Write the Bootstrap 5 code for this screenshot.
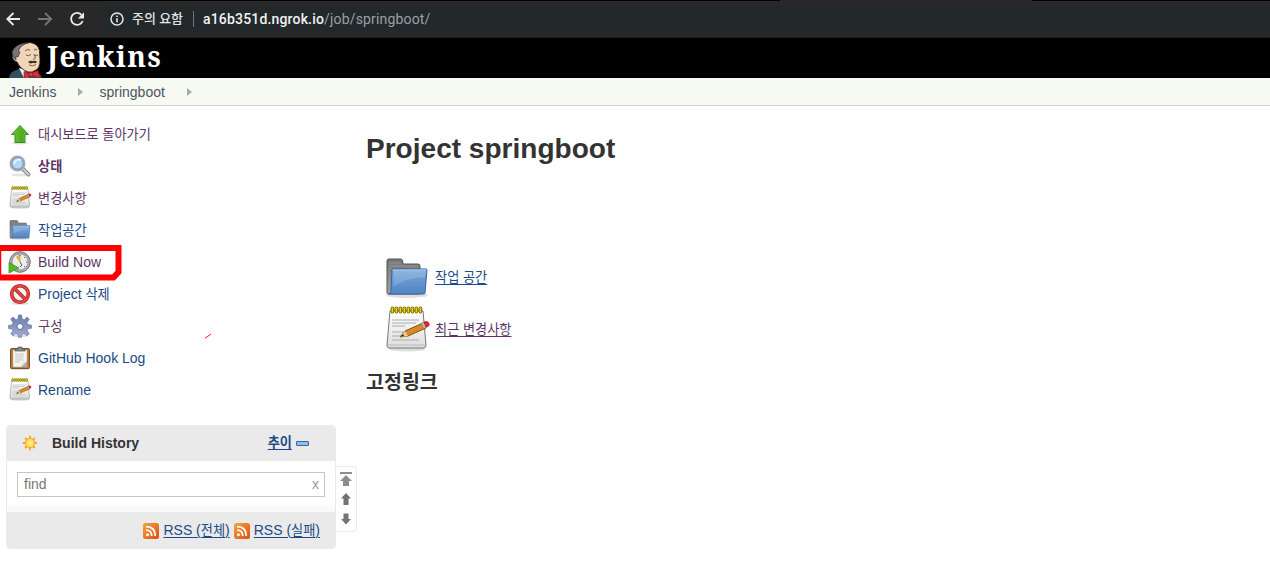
<!DOCTYPE html>
<html lang="ko">
<head>
<meta charset="utf-8">
<title>springboot [Jenkins]</title>
<link href="https://cdn.jsdelivr.net/npm/bootstrap@5.3.0/dist/css/bootstrap.min.css" rel="stylesheet">
<style>
body{font-family:"Liberation Sans","Noto Sans CJK KR",sans-serif;font-size:14px;line-height:20px;color:#333;background:#fff;overflow:hidden}
svg{display:block;flex:none}
.chrome-bar{height:38px;background:#292828;border-top:1px solid #000;border-bottom:1px solid #1f1c1b;padding-left:5px}
.tab-gap{left:780px;top:-1px;width:252px;height:1px;background:#292828}
.omnibox{height:29px;margin-left:10px;padding-left:9px;border-radius:15px 0 0 15px;background:#23282b;font-family:Roboto,"Noto Sans CJK KR",sans-serif;font-size:14px;color:#9aa0a6}
.address{letter-spacing:.17px}
.omnibox b{font-weight:500;color:#f1f1f1}
.warn{font-size:13px;font-weight:500;color:#e4e4e4;width:53px;margin-left:8px}
.sep{width:1px;height:16px;background:#73777a;margin:0 9px 0 8px}
.masthead{height:40px;background:#000;padding-left:9px}
.brand-name{font:bold 28px/36px "Noto Serif","DejaVu Serif","Liberation Serif",serif;letter-spacing:1.35px;color:#fff;margin-left:4px}
.crumbs{height:28px;background:#f6faf2;border-bottom:1px solid #cfd1ce;padding-left:9px;color:#4d545d}
.crumb-arrow{margin:1px 16px 0 22px}
.side{width:336px;padding:12px 0 0 6px}
.task{height:32px;padding-left:2px;gap:6px}
.task-text{color:#204a87;white-space:nowrap}
.ko{font-size:13.2px}
.task-text.ko{padding-top:1px}
.visited,.task-text.visited{color:#5c3566}
.build-frame{left:-5px;top:244px;width:127px;height:37px}
.history{width:330px;height:124px;margin-top:19px;border:1px solid #eaeaea;border-radius:4px;background:#fff}
.pane-head{height:35px;background:#eaeaea;padding:0 26px 1px 15px}
.find-box{width:308px;height:25px;margin:11px 0 8px 10px;border:1px solid #c5c5c5;padding:0 5px 1px 6px;color:#777}
.pane-gap{height:7px;background:#fafafa}
.feeds{height:36px;background:#eaeaea;padding:1px 15px 0 0}
.jlink{color:#204a87;text-decoration:underline;text-underline-offset:2px;text-decoration-thickness:1px}
.jlink.visited{color:#5c3566}
.pager{left:335px;top:466px;width:22px;height:66px;border:1px solid #eaeaea;border-radius:0 4px 4px 0;background:#fff}
.content-pane{padding:21px 0 0 30px}
.project-title{font-size:28px;line-height:44px;font-weight:bold;margin:0;letter-spacing:.02px}
.links{padding:81px 0 0 17px}
.link-row{height:52px;gap:4px}
.link-row .jlink{padding-bottom:1px}
.perma{font-size:19.5px;line-height:26px;font-weight:bold;margin:13px 0 0}
.stroke-mark{left:204px;top:332px}
</style>
</head>
<body>
<svg width="0" height="0" class="position-absolute">
<defs>
<linearGradient id="gFold" x2="0" y2="1"><stop stop-color="#7aa7da"/><stop offset="1" stop-color="#5085c3"/></linearGradient>
<linearGradient id="gGray" x2="0" y2="1"><stop stop-color="#747474"/><stop offset="1" stop-color="#a3a3a3"/></linearGradient>
<linearGradient id="gPaper" x2="0" y2="1"><stop stop-color="#fff"/><stop offset="1" stop-color="#ddd"/></linearGradient>
<linearGradient id="gGreen"><stop stop-color="#72cb38"/><stop offset="1" stop-color="#39960b"/></linearGradient>
<linearGradient id="gRss" x2="1" y2="1"><stop stop-color="#f7a33c"/><stop offset="1" stop-color="#dc4e15"/></linearGradient>
<linearGradient id="gGear" x2="0" y2="1"><stop stop-color="#6681ad"/><stop offset="1" stop-color="#aaa6d3"/></linearGradient>
<radialGradient id="gSun"><stop stop-color="#fff9ae"/><stop offset="1" stop-color="#ffd42c"/></radialGradient>
<symbol id="folder" viewBox="0 0 48 48"><ellipse cx="24" cy="41" rx="21" ry="3" fill="#ddd"/><path d="M4 39V7q0-2 2-2h12q2 0 2 5h15q2 0 2 2v27q0 1-2 1H6q-2 0-2-1z" fill="url(#gGray)" stroke="#555"/><path d="M6 9h12M6 12h29M6 15h3M6 19h3M6 23h3M6 27h3" stroke="#999" stroke-width=".8"/><path d="M9 15h34q1 0 1 1l-2 23q0 1-2 1H6q3-2 2-5z" fill="url(#gFold)" stroke="#3465a4"/><path d="M10 16h33l-1 7q-19 1-31 9z" fill="#fff" opacity=".16"/><path d="M9.700 16h33.500" stroke="#b0cdeb"/></symbol>
<symbol id="notepad" viewBox="0 0 48 48"><ellipse cx="24" cy="43" rx="18" ry="2.500" fill="#ddd"/><path d="M7 5h33l3 34q0 3-2 3H6q-2 0-2-3z" fill="url(#gPaper)" stroke="#777"/><path d="M5 39h37" stroke="#bbb"/><path d="M9 14h27M9 17h24M9 20h13M9 26h18M9 30h12M9 34h27" stroke="#aaa"/><g fill="#edd400" stroke="#6f6200"><rect x="8" y="1" width="2.800" height="6" rx="1.300"/><rect x="12" y="1" width="2.800" height="6" rx="1.300"/><rect x="16" y="1" width="2.800" height="6" rx="1.300"/><rect x="20" y="1" width="2.800" height="6" rx="1.300"/><rect x="24" y="1" width="2.800" height="6" rx="1.300"/><rect x="28" y="1" width="2.800" height="6" rx="1.300"/><rect x="32" y="1" width="2.800" height="6" rx="1.300"/><rect x="36" y="1" width="2.800" height="6" rx="1.300"/></g><path d="M17 31l5-6 18-8 3 5-18 8z" fill="#d68b24" stroke="#855213"/><path d="M17 31l5-6 3 5z" fill="#eecb90"/><path d="M17 31l3-3 1 2z" fill="#222"/><path d="M38 17.500l3-1.500 3 5-3 1.500z" fill="#bbb" stroke="#777" stroke-width=".6"/><path d="M41 16q4-1.500 5 1.500t-3 3.500z" fill="#ed2222" stroke="#a40000" stroke-width=".6"/></symbol>
<symbol id="rss" viewBox="0 0 16 16"><rect width="16" height="16" rx="2.500" fill="url(#gRss)"/><circle cx="4.500" cy="11.800" r="1.500" fill="#fff"/><path d="M3 7.200q5.700 0 5.700 5.800M3 3.700q9.300 0 9.300 9.300" fill="none" stroke="#fff" stroke-width="1.800"/></symbol>
</defs>
</svg>

<div class="chrome-bar d-flex align-items-center position-relative">
<div class="tab-gap position-absolute"></div>
<svg width="86" height="20" viewBox="0 0 86 20" fill="none" stroke="#e8eaed" stroke-width="1.800"><path d="M15 10H2.500M8.500 4L2.300 10l6.200 6"/><path d="M33 10h13M40 4l6.200 6-6.200 6" stroke="#737577"/><path d="M76.500 5.800A6 6 0 1 0 77.700 12"/><path d="M79 3.300v6.200h-6.200z" fill="#e8eaed" stroke="none"/></svg>
<div class="omnibox d-flex align-items-center flex-grow-1 text-nowrap">
<svg width="14" height="14" viewBox="0 0 14 14" fill="none" stroke="#e4e4e4"><circle cx="7" cy="7" r="6" stroke-width="1.500"/><path d="M7 6.200v4M7 3.500v1.500" stroke-width="1.600"/></svg>
<span class="warn">주의 요함</span><span class="sep"></span><span class="address"><b>a16b351d.ngrok.io</b>/job/springboot/</span>
</div>
</div>

<header class="masthead d-flex">
<svg width="34" height="40" viewBox="0 0 34 40"><path d="M0 40q1-7 8-8l5-3 12 5q6 0 8 6z" fill="#335061"/><path d="M10 30l5 10h4l-3-8z" fill="#f4f4f4"/><path d="M7 14Q11 5 21 4.500q8 1 9.500 8L31 22q0 8-4 10-4 3-8 2Q11 31 8 24q-4-1-4.500-4.500T7 14z" fill="#f0d6b7" stroke="#241b18" stroke-width=".8"/><path d="M7 22q-4-3-4-8Q6 5 20 4.500 11 7 9.500 13l1.500 1-2 5-2-1z" fill="#77757a" stroke="#222" stroke-width=".6"/><path d="M16 13q2-2.500 5-1m4 0q2-1.500 3 0M17 17q2.500 1.500 5-.5m4 .5q1.500 1 3 0M25 16l1.500 4q-1 1.500-2.500 1" fill="none" stroke="#5f4a3c" stroke-width=".9"/><path d="M19 24q2-2 5-1 3-1 4 1-2 2-4 .8-3 1.500-5-.8z" fill="#3c3029"/><path d="M20 27q4 2 7-.5" fill="none" stroke="#8a3e30" stroke-width=".8"/><path d="M15 33.500l6 2.500 8-3.500 2 7.500-8.500-2-7.500 2z" fill="#d92f30" stroke="#941b1b" stroke-width=".7"/><circle cx="22" cy="36.500" r="2" fill="#ef3d3a" stroke="#861715" stroke-width=".7"/></svg>
<span class="brand-name">Jenkins</span>
</header>
<nav class="crumbs d-flex align-items-center">
<span>Jenkins</span><svg class="crumb-arrow" width="5" height="8"><path d="M0 0l5 4-5 4z" fill="#aaa"/></svg><span>springboot</span><svg class="crumb-arrow" width="5" height="8"><path d="M0 0l5 4-5 4z" fill="#aaa"/></svg>
</nav>

<main class="d-flex">
<aside class="side flex-shrink-0">
<div class="task d-flex align-items-center"><svg width="24" height="24" viewBox="0 0 24 24"><ellipse cx="12" cy="21" rx="8" ry="1.500" fill="#ddd"/><path d="M12 3.500l8.500 9H17v8H7v-8H3.500z" fill="url(#gGreen)" stroke="#3c8b1d"/><path d="M12 5l6 6.500h-2v8" fill="none" stroke="#8be25a" opacity=".5"/></svg><span class="task-text visited ko">대시보드로 돌아가기</span></div>
<div class="task d-flex align-items-center"><svg width="24" height="24" viewBox="0 0 24 24"><ellipse cx="12" cy="21" rx="9" ry="1.500" fill="#e5e5e5"/><path d="M15 15l5.500 5.500" stroke="#888" stroke-width="4" stroke-linecap="round"/><path d="M15 15l5.500 5.500" stroke="#ccc" stroke-width="2" stroke-linecap="round"/><circle cx="9.500" cy="9.500" r="7" fill="#a8cff2" stroke="#aaa" stroke-width="2"/><circle cx="9.500" cy="9.500" r="5.700" fill="#b7d8f5" stroke="#648bc0"/><path d="M6 10q2-6 7-4" fill="none" stroke="#e7f3ff" stroke-width="2"/></svg><span class="task-text visited ko fw-bold">상태</span></div>
<div class="task d-flex align-items-center"><svg width="24" height="24"><use href="#notepad"/></svg><span class="task-text visited ko">변경사항</span></div>
<div class="task d-flex align-items-center"><svg width="24" height="24"><use href="#folder"/></svg><span class="task-text ko">작업공간</span></div>
<div class="task d-flex align-items-center"><svg width="24" height="24" viewBox="0 0 24 24"><circle cx="12" cy="12" r="10.300" fill="#a9a9b3" stroke="#77777d"/><circle cx="12" cy="12" r="8" fill="#efefea" stroke="#9b9ba5"/><path d="M12 12L8.500 7 12 5z" fill="#edc83a" stroke="#9a8020" stroke-width=".5"/><path d="M12 12l2 3-2 2" fill="none" stroke="#555"/><path d="M12 5v1m7 6h-1m-1-5l-1 1m1 9l-1-1" stroke="#666"/><path d="M1 12.500l10 5.500-10 5z" fill="#52b52a" stroke="#3f9a1e" stroke-width=".8"/></svg><span class="task-text visited">Build Now</span></div>
<div class="task d-flex align-items-center"><svg width="24" height="24" viewBox="0 0 24 24"><ellipse cx="12" cy="21.500" rx="9" ry="1.500" fill="#ddd"/><circle cx="12" cy="12" r="8.300" fill="#f6f3f3" stroke="#b51d1d" stroke-width="3.600"/><path d="M6 6l12 12" stroke="#b51d1d" stroke-width="3.600"/><circle cx="12" cy="12" r="8.300" fill="none" stroke="#df4545" stroke-width="2.200"/><path d="M6 6l12 12" stroke="#df4545" stroke-width="2.200"/></svg><span class="task-text">Project <span class="ko">삭제</span></span></div>
<div class="task d-flex align-items-center"><svg width="24" height="24" viewBox="0 0 24 24"><ellipse cx="12" cy="22" rx="8" ry="1.500" fill="#e2e2e2"/><g fill="url(#gGear)" stroke="#657ba3" stroke-width=".7"><path d="M10.500 1h3l.7 4 2 .8L19 3l2.300 2.300L19 8.500l.8 2 3.700.7v3l-3.700.6-.8 2 2.300 3-2.300 2-3-2.200-2 .7-.6 3h-3l-.6-3-2-.7L5 21.800l-2.300-2L5 17l-.8-2-3.700-.5v-3L4.200 11 5 8.500 2.700 5.300 5 3l3 2.800 2-.8z"/></g><circle cx="12" cy="12.500" r="3" fill="#fff" stroke="#576d9c"/></svg><span class="task-text visited ko">구성</span></div>
<div class="task d-flex align-items-center"><svg width="24" height="24" viewBox="0 0 24 24"><ellipse cx="12" cy="23" rx="10" ry="1" fill="#ddd"/><rect x="2.500" y="2.500" width="19" height="20" rx="1" fill="#b47b37" stroke="#80501d"/><path d="M5 4h14v17H5z" fill="#f5f5f2" stroke="#aaa" stroke-width=".5"/><path d="M7 8h9M7 10h9M7 12h8M7 14h9M7 16h5" stroke="#c7c7c7"/><path d="M13 21l6-6v6z" fill="#aaa"/><path d="M13 21l1-4 5-2z" fill="#ddd"/><path d="M7 5V3h3V1h4v2h3v2z" fill="#888a85" stroke="#555753" stroke-width=".7"/></svg><span class="task-text">GitHub Hook Log</span></div>
<div class="task d-flex align-items-center"><svg width="24" height="24"><use href="#notepad"/></svg><span class="task-text">Rename</span></div>

<section class="history overflow-hidden">
<div class="pane-head d-flex align-items-center">
<svg width="16" height="16" viewBox="0 0 16 16"><g stroke="#f8a52b" stroke-width="1.800" stroke-linecap="round"><path d="M8 1.500v13M1.500 8h13M3.500 3.500l9 9M12.500 3.500l-9 9"/></g><circle cx="8" cy="8" r="4.700" fill="url(#gSun)" stroke="#f6a52d"/></svg>
<b style="margin-left:14px">Build History</b>
<a class="jlink fw-bold ko ms-auto me-1">추이</a><svg width="13" height="5"><rect x=".5" y=".5" width="12" height="4" rx=".5" fill="#94bce6" stroke="#3465a4"/></svg>
</div>
<div class="find-box d-flex align-items-center justify-content-between"><span>find</span><span style="color:#999">x</span></div>
<div class="pane-gap"></div>
<div class="feeds d-flex align-items-center justify-content-end gap-1">
<svg width="16" height="16"><use href="#rss"/></svg><a class="jlink">RSS (<span class="ko">전체</span>)</a><svg width="16" height="16"><use href="#rss"/></svg><a class="jlink">RSS (<span class="ko">실패</span>)</a>
</div>
</section>
</aside>
<section class="content-pane">
<h1 class="project-title">Project springboot</h1>
<div class="links">
<div class="link-row d-flex align-items-center"><svg width="48" height="48"><use href="#folder"/></svg><a class="jlink ko">작업 공간</a></div>
<div class="link-row d-flex align-items-center"><svg width="48" height="48"><use href="#notepad"/></svg><a class="jlink visited ko">최근 변경사항</a></div>
</div>
<h2 class="perma">고정링크</h2>
</section>
</main>

<svg class="build-frame position-absolute" viewBox="0 0 127 37" fill="none" stroke="#fe0000" stroke-width="6"><path d="M5 4h118.500v24l-5 5.500H5"/><path d="M5.500 2v34" stroke-width="1.500"/></svg>
<svg class="stroke-mark position-absolute" width="8" height="8"><path d="M1 6l6-4-4 3z" fill="#f33" stroke="#f33" stroke-width=".7"/></svg>
<div class="pager position-absolute"><svg width="20" height="64" viewBox="0 0 20 64"><path d="M4 5h12v2H4zM10 8l6 6h-3v5H7v-5H4z" fill="#8c8c8c"/><path d="M10 26l5 5.500h-2.500V38h-5v-6.500H5zM10 57.500L5 52h2.500v-5.500h5V52H15z" fill="#737373"/></svg></div>
<script src="https://cdn.jsdelivr.net/npm/bootstrap@5.3.0/dist/js/bootstrap.bundle.min.js"></script>
</body>
</html>
